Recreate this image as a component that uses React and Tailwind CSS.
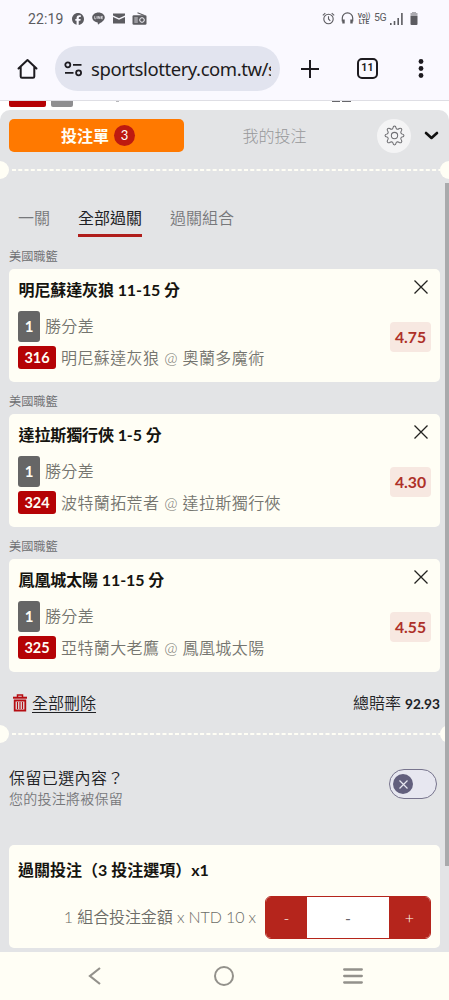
import { FaFacebook } from "react-icons/fa6";

const SELECTIONS = [
  { title: "明尼蘇達灰狼 11-15 分", code: "316", match: "明尼蘇達灰狼 @ 奧蘭多魔術", odds: "4.75" },
  { title: "達拉斯獨行俠 1-5 分", code: "324", match: "波特蘭拓荒者 @ 達拉斯獨行俠", odds: "4.30" },
  { title: "鳳凰城太陽 11-15 分", code: "325", match: "亞特蘭大老鷹 @ 鳳凰城太陽", odds: "4.55" },
];

function StatusBar() {
  return (
    <div className="flex h-[37px] shrink-0 items-center pl-[28px] pr-[31px] text-[#5c5c61] font-['Roboto',sans-serif]">
      <span className="w-[44px] text-[14px] leading-none tracking-[0.1px]">22:19</span>
      <FaFacebook className="size-[12px]" />
      <svg className="ml-[8px] size-[13px]" viewBox="0 0 13 13">
        <path d="M6.500.500C3 .5.200 2.700.200 5.600c0 2.500 2.200 4.500 5.200 5 .5.100.5.400.4 1-.1.700.1 1 .8.600 2.600-1.500 6.200-3.600 6.200-6.600C12.800 2.700 10 .5 6.500.5z" fill="currentColor" />
        <path d="M2.700 4.200v2.600h1.200M5 4.200v2.600M6.200 6.900V4.300l1.700 2.400V4.200M10.800 4.400H9.300v2.300h1.500M9.300 5.500h1.300" fill="none" stroke="#faf9ff" strokeWidth=".7" />
      </svg>
      <svg className="ml-[8px] h-[11px] w-[12px]" viewBox="0 0 12 11" fill="currentColor">
        <path d="M0 .5h12v2L6 5.200 0 2.500z" />
        <path d="M0 4l6 2.700L12 4v6.500H0z" />
      </svg>
      <svg className="ml-[7px] h-[13px] w-[15px]" viewBox="0 0 15 13">
        <path d="M5.500.800l7 2.600" stroke="currentColor" strokeWidth="1.100" />
        <rect x=".5" y="3.200" width="14" height="9.600" rx="1.300" fill="currentColor" />
        <circle cx="10" cy="8" r="2.300" fill="none" stroke="#faf9ff" strokeWidth="1" />
        <path d="M2.300 6h3.500M2.300 8h3.500M2.300 10h3.500" stroke="#faf9ff" strokeWidth=".8" />
      </svg>
      <div className="ml-auto flex items-center">
        <svg className="size-[13px]" viewBox="0 0 13 13" fill="none" stroke="currentColor" strokeWidth="1.100">
          <circle cx="6.500" cy="7" r="4.700" />
          <path d="M6.500 4.200V7l1.800 1.800M.8 3.400L3.300 1.200M12.200 3.400L9.700 1.200" />
        </svg>
        <svg className="ml-[6px] size-[13px]" viewBox="0 0 13 13" fill="none" stroke="currentColor" strokeWidth="1.200">
          <path d="M1.300 9.500V6a5.200 5.200 0 0110.400 0v3.500" />
          <path d="M2.500 7.500v4M10.500 7.500v4" strokeWidth="2.400" />
        </svg>
        <div className="ml-[4px] flex w-[12px] flex-col items-center text-[6.500px] font-bold leading-[6px]">
          <span>Vo))</span>
          <span>LTE</span>
        </div>
        <span className="ml-[4px] w-[12px] text-[10.500px] leading-none tracking-[-0.4px]">5G</span>
        <svg className="ml-[4px] h-[12px] w-[13px]" viewBox="0 0 13 12" fill="currentColor">
          <path d="M0 10h1.600v2H0zM3.700 8h1.600v4H3.700zM7.400 5H9v7H7.400zM11.100 0h1.600v12h-1.600z" />
        </svg>
        <svg className="ml-[7px] h-[13px] w-[8px]" viewBox="0 0 8 13" fill="currentColor">
          <path d="M2 0h4v1h1.500v3h-7V1H2z" opacity=".5" />
          <path d="M.5 4h7v8a1 1 0 01-1 1h-5a1 1 0 01-1-1z" />
        </svg>
      </div>
    </div>
  );
}

function AddressBar() {
  return (
    <div className="flex h-[63px] shrink-0 items-center pl-[17px] pr-[25px] text-[#1d1b20]">
      <svg className="size-[21px]" viewBox="0 0 21 21" fill="none" stroke="currentColor" strokeWidth="2" strokeLinejoin="round" strokeLinecap="round">
        <path d="M1.500 10.500l9-8.500 9 8.500M3.700 9v9.500q0 1.300 1.300 1.300h11q1.300 0 1.300-1.300V9" />
      </svg>
      <div className="ml-[17px] flex h-[45px] w-[225px] items-center rounded-full bg-[#e2e4ef] pl-[9px] pr-[9px]">
        <svg className="h-[16px] w-[19px] shrink-0" viewBox="0 0 19 16" fill="none" stroke="currentColor" strokeWidth="1.800">
          <circle cx="3.800" cy="3.800" r="2.500" />
          <circle cx="14.600" cy="11.800" r="2.500" />
          <path d="M9 3.800h8.500M1 11.800h8.500" />
        </svg>
        <span className="ml-[8px] flex-1 overflow-hidden whitespace-nowrap text-[18.500px] leading-[28px] tracking-[-0.430px] font-['Noto_Sans',sans-serif]">
          sportslottery.com.tw/s
        </span>
      </div>
      <svg className="ml-[21px] size-[18px]" viewBox="0 0 18 18" stroke="currentColor" strokeWidth="2">
        <path d="M9 0v18M0 9h18" />
      </svg>
      <div className="ml-[38px] flex size-[21px] items-center justify-center rounded-[5px] border-2 border-[#1d1b20] text-[10.500px] font-bold leading-none tracking-[0.2px] font-['Roboto',sans-serif]">
        11
      </div>
      <svg className="ml-auto h-[19px] w-[6px]" viewBox="0 0 6 19" fill="currentColor">
        <circle cx="3" cy="2.500" r="2.400" />
        <circle cx="3" cy="9.500" r="2.400" />
        <circle cx="3" cy="16.500" r="2.400" />
      </svg>
    </div>
  );
}

function Perforation() {
  return (
    <div className="flex h-[18px] shrink-0 items-center overflow-hidden">
      <div className="-ml-[9px] size-[18px] shrink-0 rounded-full bg-[#fffef5]" />
      <svg className="h-[2px] min-w-0 flex-1" preserveAspectRatio="none">
        <path d="M3 1H500" stroke="#fffef5" strokeWidth="2" strokeDasharray="4 2.270" />
      </svg>
      <div className="-mr-[9px] size-[18px] shrink-0 rounded-full bg-[#fffef5]" />
    </div>
  );
}

function SlipHeader() {
  return (
    <div className="flex h-[51px] shrink-0 items-center pl-[9px] pr-[10px]">
      <button className="flex h-[33px] w-[175px] items-center justify-center gap-[5px] rounded-[5px] bg-[#ff7900] pl-[3px] text-[16px] font-bold text-[#fffef5]">
        投注單
        <span className="flex size-[21px] items-center justify-center rounded-full bg-[#bd1a10] text-[13px] font-normal">3</span>
      </button>
      <button className="w-[181px] text-center text-[16px] font-light text-[#97989a]">我的投注</button>
      <button className="ml-[12px] flex size-[34px] items-center justify-center rounded-full bg-[#f4f4f5]">
        <svg className="size-[21px]" viewBox="0 0 24 24" fill="none" stroke="#6f6f73" strokeWidth="1.200" strokeLinejoin="round">
          <circle cx="12" cy="12" r="3.600" />
          <path d="M10.200 3.500Q10.500 1.200 12 1.200T13.800 3.500Q14.200 4.800 15.400 4.900 16.300 4.900 17.400 4 18.900 3.200 19.900 4.200 20.800 5.200 20 6.600 19.100 7.700 19.200 8.700 19.400 9.800 20.500 10.200 22.800 10.500 22.800 12T20.500 13.800Q19.400 14.200 19.200 15.300 19.100 16.300 20 17.400 20.800 18.900 19.900 19.900 18.900 20.800 17.400 20 16.300 19.100 15.400 19.100 14.200 19.300 13.800 20.500 13.500 22.800 12 22.800T10.200 20.500Q9.800 19.300 8.600 19.100 7.700 19.100 6.600 20 5.200 20.800 4.200 19.900 3.200 18.900 4 17.400 4.900 16.300 4.800 15.300 4.600 14.200 3.500 13.800 1.200 13.500 1.200 12T3.500 10.200Q4.600 9.800 4.800 8.700 4.900 7.700 4 6.600 3.200 5.200 4.200 4.200 5.200 3.200 6.600 4 7.700 4.900 8.600 4.900 9.800 4.800 10.200 3.500z" />
        </svg>
      </button>
      <svg className="ml-auto h-[9px] w-[15px]" viewBox="0 0 15 9" fill="none" stroke="#111" strokeWidth="2.600" strokeLinecap="round" strokeLinejoin="round">
        <path d="M2 2l5.500 5L13 2" />
      </svg>
    </div>
  );
}

function SelectionCard({ title, code, match, odds }) {
  return (
    <section>
      <div className="flex h-[32px] items-end pb-[3px] text-[12.200px] font-[350] leading-[18px] text-[#6c6d70]">美國職籃</div>
      <div className="flex h-[113px] justify-between rounded-[5px] bg-[#fffef5] pl-[9px] pr-[9px]">
        <div className="flex flex-col items-start whitespace-nowrap">
          <h3 className="flex h-[41px] items-center pl-[0.5px] text-[16px] font-bold tracking-[-0.1px] text-[#15140f]">{title}</h3>
          <div className="flex h-[32px] items-center gap-[5px]">
            <span className="flex h-[31px] w-[22px] items-center justify-center rounded-[3px] bg-[#666666] text-[15px] font-bold text-[#fffef5]">1</span>
            <span className="text-[16px] font-[350] tracking-[0.350px] text-[#75756f]">勝分差</span>
          </div>
          <div className="mt-[4px] flex h-[23px] items-center gap-[5px]">
            <span className="flex h-[23px] w-[38px] items-center justify-center rounded-[3px] bg-[#b50205] text-[14.500px] font-bold text-[#fffef5]">{code}</span>
            <span className="text-[16px] font-[350] tracking-[0.400px] text-[#75756f]">{match}</span>
          </div>
        </div>
        <div className="flex flex-col items-end">
          <svg className="mr-[3px] mt-[11px] size-[14px]" viewBox="0 0 14 14" stroke="#22221f" strokeWidth="1.300">
            <path d="M.5.5l13 13M13.500.5l-13 13" />
          </svg>
          <span className="mt-[28px] flex h-[30px] w-[41px] items-center justify-center rounded-[4px] bg-[#f7e8e1] text-[15.800px] font-bold text-[#ae3028]">{odds}</span>
        </div>
      </div>
    </section>
  );
}

function StakeCard() {
  return (
    <div className="flex h-[103px] flex-col rounded-[5px] bg-[#fffef5] px-[9px]">
      <h3 className="flex h-[51px] items-center whitespace-nowrap pb-[1px] text-[16px] font-bold text-[#15140f]">過關投注（3 投注選項）x1</h3>
      <div className="flex items-center justify-end">
        <span className="mr-[9px] whitespace-nowrap pb-[2px] text-[16px] font-[350] tracking-[-0.1px] text-[#6c6c67]">1 組合投注金額 x NTD 10 x</span>
        <div className="flex h-[43px] w-[166px] overflow-hidden rounded-[6px] border border-[#b5251c] bg-white">
          <button className="w-[41px] bg-[#b5251c] text-[16px] font-light text-[#fffef5]">-</button>
          <span className="flex flex-1 items-center justify-center text-[16px] text-[#66666b]">-</span>
          <button className="w-[41px] bg-[#b5251c] text-[16px] font-light text-[#fffef5]">+</button>
        </div>
      </div>
    </div>
  );
}

function NavigationBar() {
  return (
    <div className="flex h-[48px] shrink-0 items-center bg-[#fffef5] pl-[88px] pr-[86px]">
      <svg className="h-[18px] w-[13px]" viewBox="0 0 13 18" fill="none" stroke="#93918b" strokeWidth="2.200">
        <path d="M12 1L2 9l10 8" />
      </svg>
      <div className="ml-[113px] size-[20px] rounded-full border-[2.500px] border-[#93918b]" />
      <svg className="ml-auto h-[16px] w-[20px]" viewBox="0 0 20 16" stroke="#93918b" strokeWidth="2.300" strokeLinecap="round">
        <path d="M1.200 1.500h17.600M1.200 8h17.600M1.200 14.500h17.600" />
      </svg>
    </div>
  );
}

export default function App() {
  return (
    <div className="relative flex h-[1000px] w-[449px] flex-col overflow-hidden bg-[#faf9ff] font-['Lato','Noto_Sans_CJK_TC',sans-serif]">
      <StatusBar />
      <AddressBar />
      <div className="flex h-[10px] shrink-0 items-start border-t border-[#dedee4] bg-white pl-[9px]">
        <div className="h-[6px] w-[37px] rounded-b-[2px] bg-[#b50205]" />
        <div className="ml-[5px] h-[6px] w-[22px] rounded-b-[2px] bg-[#8e8e90]" />
        <div className="ml-[43px] h-px w-[3px] bg-[#b8b8bb]" />
        <div className="ml-[213px] h-px w-[8px] bg-[#66666a]" />
        <div className="ml-[2px] h-px w-[9px] bg-[#66666a]" />
      </div>
      <div className="flex shrink-0 flex-col bg-white">
        <div className="flex h-[842px] flex-col overflow-hidden rounded-t-[10px] bg-[#e3e4e6]">
          <SlipHeader />
          <Perforation />
          <nav className="flex h-[58px] shrink-0 items-end gap-[28px] pl-[18px] text-[16px] font-[350] text-[#77787b]">
            <span className="flex h-[37px] border-b-[3px] border-transparent leading-[36px]">一關</span>
            <span className="flex h-[37px] border-b-[3px] border-[#b01d1b] font-normal leading-[36px] text-[#202124]">全部過關</span>
            <span className="flex h-[37px] border-b-[3px] border-transparent leading-[36px]">過關組合</span>
          </nav>
          <div className="flex shrink-0 flex-col px-[9px]">
            {SELECTIONS.map((item) => (
              <SelectionCard key={item.code} {...item} />
            ))}
          </div>
          <div className="flex h-[53px] shrink-0 items-center justify-between pb-[1px] pt-[9px] pl-[13px] pr-[9px]">
            <button className="flex items-center gap-[5px] text-[16px] font-[350] text-[#202124]">
              <svg className="h-[18px] w-[14px]" viewBox="0 0 14 18" fill="none" stroke="#b50d12">
                <path d="M4.500 3V1h5v2" strokeWidth="1.500" />
                <path d="M0 3.700h14" strokeWidth="2" />
                <path d="M1.700 6.500h10.600v10H1.700z" strokeWidth="1.800" />
                <path d="M4.500 8v7M7 8v7M9.500 8v7" strokeWidth="1.200" />
              </svg>
              <span className="underline decoration-1 underline-offset-[3px]">全部刪除</span>
            </button>
            <span className="text-[16px] font-[350] text-[#202124]">
              總賠率<b className="ml-[4px] text-[13.700px] font-bold">92.93</b>
            </span>
          </div>
          <Perforation />
          <div className="flex h-[102px] shrink-0 items-start justify-between pl-[9px] pr-[12px] pt-[24px]">
            <div className="flex flex-col font-[350]">
              <span className="-mt-[1px] text-[16px] leading-[23px] tracking-[0.400px] text-[#202124]">保留已選內容？</span>
              <span className="text-[14px] leading-[20px] tracking-[0.250px] text-[#77787b]">您的投注將被保留</span>
            </div>
            <div className="mt-[2px] flex h-[30px] w-[48px] items-center rounded-full border border-[#77748d] bg-[#e7e7f0] pl-[3px]">
              <div className="flex size-[20px] items-center justify-center rounded-full bg-[#625f7d]">
                <svg className="size-[9px]" viewBox="0 0 9 9" stroke="#e7e7f0" strokeWidth="1.200">
                  <path d="M.5.5l8 8M8.500.5l-8 8" />
                </svg>
              </div>
            </div>
          </div>
          <div className="shrink-0 px-[9px]">
            <StakeCard />
          </div>
        </div>
      </div>
      <NavigationBar />
      <div className="absolute right-0 top-[183px] h-[683px] w-[4px] bg-[#a9aaac]" />
    </div>
  );
}
